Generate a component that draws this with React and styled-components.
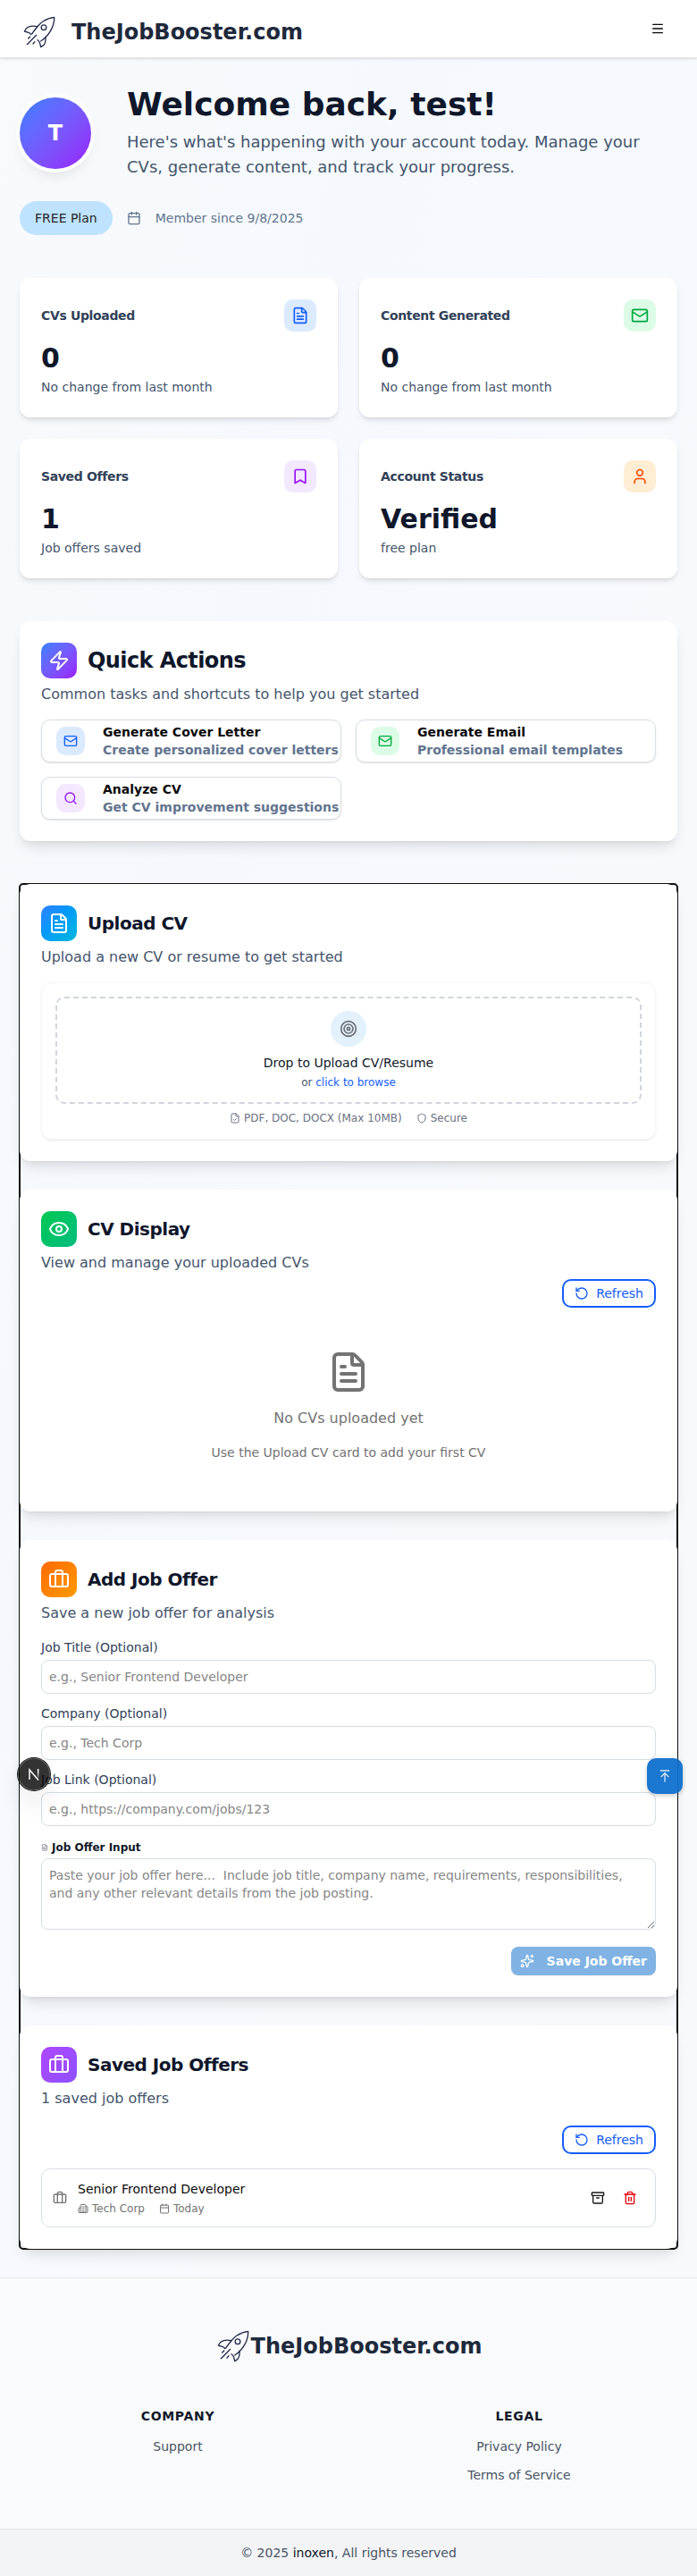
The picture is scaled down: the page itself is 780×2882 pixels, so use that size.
import React from "react";
import styled, { createGlobalStyle, css } from "styled-components";
import {
  Archive,
  ArrowUpToLine,
  Bookmark,
  Briefcase,
  Building2,
  Calendar,
  Eye,
  FileCheck,
  FileText,
  Mail,
  Menu,
  RotateCcw,
  Search,
  Shield,
  Sparkles,
  Target,
  Trash2,
  User,
  Zap,
} from "lucide-react";

const GlobalStyle = createGlobalStyle`
  *, *::before, *::after { box-sizing: border-box; }
  body { margin: 0; }
  h1, h2, h3, p, ul { margin: 0; padding: 0; }
  ul { list-style: none; }
  a { color: inherit; text-decoration: none; }
  button, input, textarea { font: inherit; }
  svg { display: block; flex-shrink: 0; }
`;

const Page = styled.div`
  position: relative;
  min-height: 2882px;
  font-family: "DejaVu Sans", sans-serif;
  font-size: 14px;
  line-height: 20px;
  color: #0a0a0a;
  background: linear-gradient(to bottom right, #f8fafc, #f5f9fd 30%, #f7f9fd 60%, #f7f9fc);
`;

const TopBar = styled.header`
  display: flex;
  align-items: center;
  justify-content: space-between;
  height: 65px;
  padding: 0 36px 0 26px;
  background: #fff;
  border-bottom: 1px solid #e5e7eb;
  box-shadow: 0 1px 3px rgba(0, 0, 0, 0.1), 0 1px 2px -1px rgba(0, 0, 0, 0.1);
`;

const Brand = styled.a`
  display: flex;
  align-items: center;
  gap: ${({ $gap }) => $gap}px;
  padding-top: ${({ $drop = 0 }) => $drop}px;
  padding-left: ${({ $inset = 0 }) => $inset}px;
  font-size: 24px;
  line-height: 32px;
  font-weight: 700;
  color: #1e293b;
`;

const Main = styled.main`
  display: flex;
  flex-direction: column;
  gap: 48px;
  padding: 32px 22px;
`;

const Intro = styled.section`
  display: flex;
  flex-direction: column;
  gap: 24px;
`;

const Greeting = styled.div`
  display: flex;
  align-items: center;
  gap: 40px;
`;

const Avatar = styled.div`
  display: grid;
  place-items: center;
  flex: none;
  width: 80px;
  height: 80px;
  border-radius: 50%;
  color: #fff;
  font-size: 24px;
  font-weight: 700;
  background: linear-gradient(to bottom right in oklab, #2b7fff, #9810fa);
  box-shadow: 0 0 0 4px #fff, 0 10px 15px -3px rgba(0, 0, 0, 0.1), 0 4px 6px -4px rgba(0, 0, 0, 0.1);
`;

const Welcome = styled.h1`
  margin-bottom: 8px;
  font-size: 36px;
  line-height: 40px;
  font-weight: 700;
  color: #0f172b;
`;

const Lead = styled.p`
  font-size: 18px;
  line-height: 28px;
  color: #45556c;
`;

const MemberRow = styled.div`
  display: flex;
  align-items: center;
  gap: 16px;
  color: #62748e;
`;

const PlanBadge = styled.span`
  padding: 9px 17px;
  border-radius: 19px;
  color: #262626;
  background: #bfe3fe;
`;

const StatGrid = styled.section`
  display: grid;
  grid-template-columns: 1fr 1fr;
  gap: 24px;
`;

const StatCard = styled.article`
  padding: 24px;
  border-radius: 12px;
  background: #fff;
  box-shadow: 0 4px 6px -1px rgba(0, 0, 0, 0.1), 0 2px 4px -2px rgba(0, 0, 0, 0.1);
`;

const StatHead = styled.div`
  display: flex;
  align-items: center;
  justify-content: space-between;
  margin-bottom: 12px;
  font-weight: 700;
  letter-spacing: -0.025em;
  color: #314158;
`;

const tones = {
  blue: css`background: #dbeafe; color: #155dfc;`,
  green: css`background: #dcfce7; color: #00a63e;`,
  purple: css`background: #f3e8ff; color: #9810fa;`,
  orange: css`background: #ffedd4; color: #f54900;`,
};

const IconTile = styled.span`
  display: grid;
  place-items: center;
  flex: none;
  width: ${({ $size }) => $size}px;
  height: ${({ $size }) => $size}px;
  border-radius: 10px;
  ${({ $tone }) => tones[$tone]}
`;

const StatValue = styled.div`
  margin-bottom: 4px;
  font-size: 30px;
  line-height: 36px;
  font-weight: 700;
  color: #0f172b;
`;

const StatNote = styled.p`
  color: #45556c;
`;

const Panel = styled.section`
  position: relative;
  padding: 24px;
  border-radius: 12px;
  background: #fff;
  box-shadow: 0 10px 15px -3px rgba(0, 0, 0, 0.1), 0 4px 6px -4px rgba(0, 0, 0, 0.1);
`;

const PanelHead = styled.div`
  display: flex;
  align-items: center;
  gap: 12px;
  margin-bottom: 6px;
`;

const PanelIcon = styled.span`
  display: grid;
  place-items: center;
  width: 40px;
  height: 40px;
  border-radius: 10px;
  color: #fff;
  background: linear-gradient(to bottom right in oklab, ${({ $stops }) => $stops});
`;

const PanelTitle = styled.h2`
  font-size: ${({ $size = 20 }) => $size}px;
  line-height: 32px;
  font-weight: 700;
  letter-spacing: -0.025em;
  color: #0f172b;
`;

const PanelText = styled.p`
  margin-bottom: ${({ $space = 16 }) => $space}px;
  font-size: 16px;
  line-height: 24px;
  color: #45556c;
`;

const ActionGrid = styled.div`
  display: grid;
  grid-template-columns: 1fr 1fr;
  gap: 16px;
`;

const ActionButton = styled.button`
  display: flex;
  align-items: center;
  gap: 20px;
  height: 48px;
  min-width: 0;
  padding: 0 16px;
  border: 1px solid #d9dee3;
  border-radius: 10px;
  background: #fff;
  box-shadow: 0 1px 2px rgba(0, 0, 0, 0.12);
  text-align: left;
  white-space: nowrap;
  font-weight: 700;
  line-height: 20px;
  color: #0a0a0a;
`;

const ActionNote = styled.span`
  display: block;
  color: #62748e;
`;

const FocusedStack = styled.div`
  display: flex;
  flex-direction: column;
  gap: 32px;
  outline: 2px solid #101010;
  outline-offset: -1px;
  border-radius: 4px;
`;

const UploadBox = styled.div`
  padding: 15px;
  border: 1px solid #f6f7f8;
  border-radius: 12px;
  box-shadow: 0 1px 2px rgba(0, 0, 0, 0.1);
`;

const DropZone = styled.div`
  display: flex;
  flex-direction: column;
  align-items: center;
  justify-content: center;
  height: 120px;
  margin-bottom: 8px;
  border: 2px dashed #d1d5dc;
  border-radius: 10px;
  color: #101828;
`;

const DropIcon = styled.span`
  display: grid;
  place-items: center;
  width: 40px;
  height: 40px;
  margin-bottom: 8px;
  border-radius: 50%;
  background: #e2f1fb;
  color: #6b7075;
`;

const DropHint = styled.p`
  margin-top: 4px;
  font-size: 12px;
  line-height: 16px;
  color: #4a5565;

  a { color: #155dfc; }
`;

const MetaRow = styled.div`
  display: flex;
  justify-content: ${({ $center }) => ($center ? "center" : "flex-start")};
  gap: 16px;
  font-size: 12px;
  line-height: 16px;
  color: ${({ $color }) => $color};
`;

const MetaItem = styled.span`
  display: inline-flex;
  align-items: center;
  gap: 4px;
`;

const ButtonRow = styled.div`
  display: flex;
  justify-content: flex-end;
  margin-bottom: ${({ $space = 0 }) => $space}px;
`;

const OutlineButton = styled.button`
  display: flex;
  align-items: center;
  gap: 8px;
  height: 32px;
  padding: 0 12px;
  border: 2px solid #155dfc;
  border-radius: 10px;
  background: #fff;
  color: #155dfc;
  line-height: 20px;
`;

const EmptyState = styled.div`
  display: flex;
  flex-direction: column;
  align-items: center;
  gap: 16px;
  padding: 48px 0 32px;
  color: #737373;
`;

const EmptyTitle = styled.p`
  font-size: 16px;
  line-height: 24px;
`;

const Form = styled.form`
  display: flex;
  flex-direction: column;
`;

const Field = styled.label`
  display: flex;
  flex-direction: column;
  gap: 4px;
  margin-bottom: ${({ $space = 12 }) => $space}px;
  color: #314158;
`;

const fieldBox = css`
  width: 100%;
  border: 1px solid #d5dce4;
  border-radius: 8px;
  background: #fff;
  outline: 0;
  font-size: 14px;
  line-height: 20px;
  &::placeholder { color: #868686; opacity: 1; }
`;

const TextInput = styled.input`
  ${fieldBox}
  height: 38px;
  padding: 8px;
`;

const TextArea = styled.textarea`
  ${fieldBox}
  display: block;
  height: 80px;
  padding: 8px;
  resize: vertical;
`;

const InputCaption = styled.span`
  display: flex;
  align-items: center;
  gap: 4px;
  font-size: 12px;
  line-height: 16px;
  font-weight: 700;
  color: #101828;

  svg { color: #6a7282; }
`;

const SaveButton = styled.button`
  display: flex;
  align-items: center;
  gap: 14px;
  height: 32px;
  padding: 0 10px;
  border: 0;
  border-radius: 8px;
  background: #80b3e3;
  box-shadow: 0 1px 2px rgba(0, 0, 0, 0.06);
  color: #fff;
  font-weight: 700;
  line-height: 20px;
`;

const OfferRow = styled.article`
  display: flex;
  align-items: center;
  gap: 12px;
  padding: 12px;
  border: 1px solid #d9dfe6;
  border-radius: 10px;
  color: #737373;
`;

const OfferBody = styled.div`
  flex: 1;
`;

const OfferTitle = styled.h3`
  margin-bottom: 4px;
  font-size: 14px;
  line-height: 20px;
  font-weight: 400;
  color: #0a0a0a;
`;

const OfferTools = styled.div`
  display: flex;
  gap: 4px;
`;

const ToolButton = styled.button`
  display: grid;
  place-items: center;
  width: 32px;
  height: 32px;
  padding: 0;
  border: 0;
  background: none;
  color: ${({ $danger }) => ($danger ? "#e7000b" : "#171717")};
`;

const Footer = styled.footer`
  border-top: 1px solid #e5e7eb;
  background: #f9fafc;
`;

const FooterTop = styled.div`
  display: flex;
  flex-direction: column;
  align-items: center;
  height: 280px;
  padding: 58px 24px 0;
`;

const FooterColumns = styled.div`
  display: grid;
  grid-template-columns: 1fr 1fr;
  gap: 32px;
  width: 100%;
  margin-top: 50px;
  text-align: center;
`;

const FooterHeading = styled.h3`
  margin-bottom: 14px;
  font-size: 14px;
  line-height: 20px;
  font-weight: 700;
  letter-spacing: 0.05em;
  color: #101828;
`;

const FooterLinks = styled.ul`
  display: flex;
  flex-direction: column;
  gap: 12px;
  color: #4a5565;
`;

const Copyright = styled.div`
  padding: 16px;
  border-top: 1px solid #e5e7eb;
  background: #f3f4f6;
  text-align: center;
  color: #4a5565;

  a { color: #101828; }
`;

const DevBadge = styled.div`
  position: absolute;
  z-index: 5;
  left: 20px;
  top: 1967px;
  display: grid;
  place-items: center;
  width: 36px;
  height: 36px;
  border-radius: 50%;
  background: rgba(0, 0, 0, 0.8);
  box-shadow: 0 0 0 1px #171717, inset 0 0 0 1px rgba(255, 255, 255, 0.14),
    0 16px 32px -8px rgba(0, 0, 0, 0.24);
`;

const ToTopButton = styled.button`
  position: absolute;
  z-index: 5;
  left: 724px;
  top: 1967px;
  display: grid;
  place-items: center;
  width: 40px;
  height: 40px;
  padding: 0;
  border: 0;
  border-radius: 10px;
  color: #d9e9f8;
  background: rgba(13, 111, 204, 0.94);
  box-shadow: 0 2px 5px rgba(0, 0, 0, 0.2);
`;

function Rocket() {
  return (
    <svg width="36" height="36" viewBox="48 24 108 108" fill="none" stroke="#232b4b" strokeWidth="4" strokeLinecap="round" strokeLinejoin="round">
      <path d="M152 28C126 30 101 48 82 77M152 28c1 30-17 62-45 80M82 77l-5 7" />
      <circle cx="117" cy="62" r="8.5" />
      <path d="M97 59c-14-3-31-2-39 7l-6 9 13 4c5 1 8 3 9 7" />
      <path d="M123 94c1 12-1 22-7 28l-9 6-3-13c-1-5-4-8-8-11" />
      <path d="M92 88l-31 31M71 93l-6 6M87 110l-6 7" />
    </svg>
  );
}

function NMark() {
  return (
    <svg width="14" height="14" viewBox="0 0 14 14" fill="none" stroke="#fff" strokeWidth="1.5">
      <defs>
        <linearGradient id="fade" x1="0" y1="0" x2="0" y2="1">
          <stop offset="0.3" stopColor="#fff" />
          <stop offset="1" stopColor="#fff" stopOpacity="0.2" />
        </linearGradient>
      </defs>
      <path d="M2 13V2L12 13.6" />
      <rect x="10.9" y="1" width="1.5" height="10" fill="url(#fade)" stroke="none" />
    </svg>
  );
}

const stats = [
  { title: "CVs Uploaded", value: "0", note: "No change from last month", icon: FileText, tone: "blue" },
  { title: "Content Generated", value: "0", note: "No change from last month", icon: Mail, tone: "green" },
  { title: "Saved Offers", value: "1", note: "Job offers saved", icon: Bookmark, tone: "purple" },
  { title: "Account Status", value: "Verified", note: "free plan", icon: User, tone: "orange" },
];

const actions = [
  { title: "Generate Cover Letter", note: "Create personalized cover letters", icon: Mail, tone: "blue" },
  { title: "Generate Email", note: "Professional email templates", icon: Mail, tone: "green" },
  { title: "Analyze CV", note: "Get CV improvement suggestions", icon: Search, tone: "purple" },
];

function PanelHeader({ icon: Icon, stops, title, size, text, space }) {
  return (
    <>
      <PanelHead>
        <PanelIcon $stops={stops}><Icon size={24} /></PanelIcon>
        <PanelTitle $size={size}>{title}</PanelTitle>
      </PanelHead>
      <PanelText $space={space}>{text}</PanelText>
    </>
  );
}

function RefreshButton() {
  return <OutlineButton><RotateCcw size={16} />Refresh</OutlineButton>;
}

export default function App() {
  return (
    <Page>
      <GlobalStyle />
      <TopBar>
        <Brand href="#" $gap={18} $drop={8}><Rocket />TheJobBooster.com</Brand>
        <Menu size={16} />
      </TopBar>

      <Main>
        <Intro>
          <Greeting>
            <Avatar>T</Avatar>
            <div>
              <Welcome>Welcome back, test!</Welcome>
              <Lead>
                Here's what's happening with your account today. Manage your CVs, generate content, and track your progress.
              </Lead>
            </div>
          </Greeting>
          <MemberRow>
            <PlanBadge>FREE Plan</PlanBadge>
            <Calendar size={16} />
            <span>Member since 9/8/2025</span>
          </MemberRow>
        </Intro>

        <StatGrid>
          {stats.map(({ title, value, note, icon: Icon, tone }) => (
            <StatCard key={title}>
              <StatHead>
                {title}
                <IconTile $size={36} $tone={tone}><Icon size={20} /></IconTile>
              </StatHead>
              <StatValue>{value}</StatValue>
              <StatNote>{note}</StatNote>
            </StatCard>
          ))}
        </StatGrid>

        <Panel>
          <PanelHeader icon={Zap} stops="#2b7fff, #9810fa" title="Quick Actions" size={24} text="Common tasks and shortcuts to help you get started" />
          <ActionGrid>
            {actions.map(({ title, note, icon: Icon, tone }) => (
              <ActionButton key={title}>
                <IconTile $size={32} $tone={tone}><Icon size={16} /></IconTile>
                <span>
                  {title}
                  <ActionNote>{note}</ActionNote>
                </span>
              </ActionButton>
            ))}
          </ActionGrid>
        </Panel>

        <FocusedStack>
          <Panel>
            <PanelHeader icon={FileText} stops="#2b7fff, #0099fb 42%, #00b8db" title="Upload CV" text="Upload a new CV or resume to get started" />
            <UploadBox>
              <DropZone>
                <DropIcon><Target size={20} /></DropIcon>
                <p>Drop to Upload CV/Resume</p>
                <DropHint>or <a href="#">click to browse</a></DropHint>
              </DropZone>
              <MetaRow $center $color="#6a7282">
                <MetaItem><FileCheck size={12} />PDF, DOC, DOCX (Max 10MB)</MetaItem>
                <MetaItem><Shield size={12} />Secure</MetaItem>
              </MetaRow>
            </UploadBox>
          </Panel>

          <Panel>
            <PanelHeader icon={Eye} stops="#00c950, #00bc7d" title="CV Display" text="View and manage your uploaded CVs" space={6} />
            <ButtonRow><RefreshButton /></ButtonRow>
            <EmptyState>
              <FileText size={48} />
              <EmptyTitle>No CVs uploaded yet</EmptyTitle>
              <p>Use the Upload CV card to add your first CV</p>
            </EmptyState>
          </Panel>

          <Panel>
            <PanelHeader icon={Briefcase} stops="#ff6900, #fe9a00" title="Add Job Offer" text="Save a new job offer for analysis" />
            <Form>
              <Field>Job Title (Optional)<TextInput placeholder="e.g., Senior Frontend Developer" /></Field>
              <Field>Company (Optional)<TextInput placeholder="e.g., Tech Corp" /></Field>
              <Field $space={16}>Job Link (Optional)<TextInput placeholder="e.g., https://company.com/jobs/123" /></Field>
              <Field $space={19}>
                <InputCaption><FileText size={8} />Job Offer Input</InputCaption>
                <TextArea placeholder={"Paste your job offer here...  Include job title, company name, requirements, responsibilities, and any other relevant details from the job posting."} />
              </Field>
              <ButtonRow>
                <SaveButton type="button"><Sparkles size={16} />Save Job Offer</SaveButton>
              </ButtonRow>
            </Form>
          </Panel>

          <Panel>
            <PanelHeader icon={Briefcase} stops="#ad46ff, #8e51ff" title="Saved Job Offers" text="1 saved job offers" space={18} />
            <ButtonRow $space={16}><RefreshButton /></ButtonRow>
            <OfferRow>
              <Briefcase size={16} />
              <OfferBody>
                <OfferTitle>Senior Frontend Developer</OfferTitle>
                <MetaRow $color="#737373">
                  <MetaItem><Building2 size={12} />Tech Corp</MetaItem>
                  <MetaItem><Calendar size={12} />Today</MetaItem>
                </MetaRow>
              </OfferBody>
              <OfferTools>
                <ToolButton aria-label="Archive"><Archive size={16} /></ToolButton>
                <ToolButton $danger aria-label="Delete"><Trash2 size={16} /></ToolButton>
              </OfferTools>
            </OfferRow>
          </Panel>
        </FocusedStack>
      </Main>

      <Footer>
        <FooterTop>
          <Brand href="#" $gap={2} $inset={2}><Rocket />TheJobBooster.com</Brand>
          <FooterColumns>
            <div>
              <FooterHeading>COMPANY</FooterHeading>
              <FooterLinks><li><a href="#">Support</a></li></FooterLinks>
            </div>
            <div>
              <FooterHeading>LEGAL</FooterHeading>
              <FooterLinks>
                <li><a href="#">Privacy Policy</a></li>
                <li><a href="#">Terms of Service</a></li>
              </FooterLinks>
            </div>
          </FooterColumns>
        </FooterTop>
        <Copyright>© 2025 <a href="#">inoxen</a>, All rights reserved</Copyright>
      </Footer>

      <DevBadge><NMark /></DevBadge>
      <ToTopButton aria-label="Back to top"><ArrowUpToLine size={16} /></ToTopButton>
    </Page>
  );
}
